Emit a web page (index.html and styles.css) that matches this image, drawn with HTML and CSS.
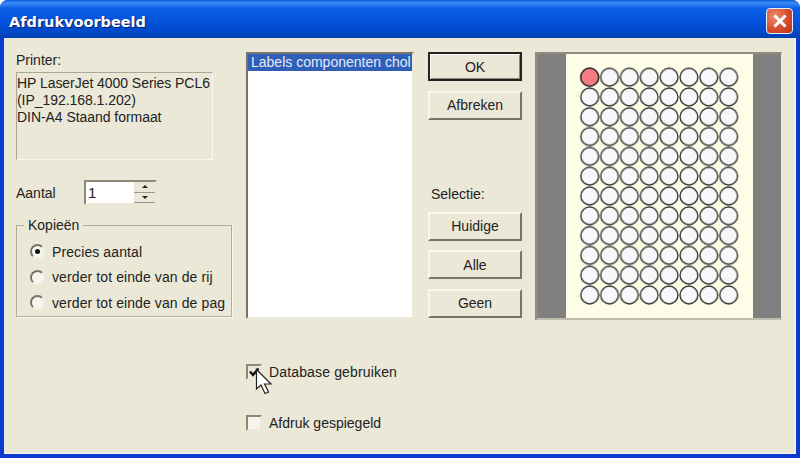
FILE: index.html
```html
<!DOCTYPE html>
<html lang="nl">
<head>
    <meta charset="UTF-8">
    <meta name="viewport" content="width=device-width, initial-scale=1.0">
    <title>Afdrukvoorbeeld</title>
    <link rel="stylesheet" href="styles.css">
</head>
<body>
    <div class="window">
        <div class="titlebar">
            <span class="title">Afdrukvoorbeeld</span>
            <button class="close" type="button" aria-label="Sluiten">
                <svg width="16" height="16" viewBox="0 0 16 16"><path d="M2.5 2.5 L13.5 13.5 M13.5 2.5 L2.5 13.5" stroke="#fff" stroke-width="3" fill="none"/></svg>
            </button>
        </div>

        <div class="client">
            <div class="col-left">
                <div class="field-label">Printer:</div>
                <div class="printer-box">HP LaserJet 4000 Series PCL6<br>(IP_192.168.1.202)<br>DIN-A4 Staand formaat</div>

                <div class="amount-row">
                    <span class="amount-label">Aantal</span>
                    <div class="spin">
                        <span class="spin-value">1</span>
                        <span class="spin-buttons">
                            <span class="spin-btn"><i class="arrow-up"></i></span>
                            <span class="spin-btn"><i class="arrow-down"></i></span>
                        </span>
                    </div>
                </div>

                <div class="group">
                    <span class="group-title">Kopieën</span>
                    <div class="radio-row"><span class="radio checked"></span>Precies aantal</div>
                    <div class="radio-row"><span class="radio"></span>verder tot einde van de rij</div>
                    <div class="radio-row"><span class="radio"></span>verder tot einde van de pag</div>
                </div>
            </div>

            <div class="col-middle">
                <div class="listbox">
                    <div class="list-item">Labels componenten chol</div>
                </div>
                <div class="check-row first">
                    <span class="check checked">
                        <svg width="12" height="12" viewBox="0 0 12 12"><path d="M2 5.5 L5 9 L10.5 2.5" stroke="#111" stroke-width="2.4" fill="none"/></svg>
                    </span>
                    Database gebruiken
                    <svg class="cursor" width="20" height="28" viewBox="0 0 20 28"><path d="M1.5 1.5 L1.5 21 L6 17 L10 25.5 L13.5 24 L9.5 16 L16 16 Z" fill="#fff" stroke="#222" stroke-width="1.2"/></svg>
                </div>
                <div class="check-row second">
                    <span class="check"></span>
                    Afdruk gespiegeld
                </div>
            </div>

            <div class="col-buttons">
                <button class="btn default" type="button">OK</button>
                <button class="btn" type="button">Afbreken</button>
                <div class="selection-label">Selectie:</div>
                <button class="btn" type="button">Huidige</button>
                <button class="btn" type="button">Alle</button>
                <button class="btn" type="button">Geen</button>
            </div>

            <div class="preview">
                <div class="margin-bar"></div>
                <div class="paper">
                    <svg width="187" height="266" viewBox="0 0 187 266">
                        <defs>
                            <pattern id="label" width="19.85" height="19.8" patternUnits="userSpaceOnUse" x="13.8" y="13.3">
                                <circle cx="9.9" cy="9.9" r="8.9" fill="#f8f8fa" stroke="#333" stroke-width="1.4"/>
                            </pattern>
                        </defs>
                        <rect x="13.8" y="13.3" width="158.8" height="237.6" fill="url(#label)"/>
                        <circle cx="23.7" cy="23.2" r="8.9" fill="#f57b80" stroke="#333" stroke-width="1.4"/>
                    </svg>
                </div>
                <div class="margin-bar"></div>
            </div>
        </div>
    </div>
</body>
</html>
```

FILE: styles.css
```css
body {
    margin: 0;
    font-family: "Liberation Sans", Arial, sans-serif;
    font-size: 14px;
    color: #222;
    background: #fff;
}

.window {
    width: 800px;
    height: 458px;
    overflow: hidden;
    background: #0a3ad0;
    border-radius: 8px 8px 0 0;
    display: flex;
    flex-direction: column;
}

.titlebar {
    height: 38px;
    flex: none;
    display: flex;
    align-items: center;
    justify-content: space-between;
    padding: 0 7px 0 9px;
    box-sizing: border-box;
    background: linear-gradient(180deg, #0a5be0 0%, #3f8cf3 8%, #0a5fe8 22%, #0453dc 55%, #0349c8 85%, #0240b0 100%);
}

.title {
    font-family: "DejaVu Sans", sans-serif;
    font-weight: bold;
    font-size: 14.5px;
    color: #fff;
    text-shadow: 1px 1px 1px #0a1f70;
    margin-top: 5px;
}

.close {
    width: 27px;
    height: 26px;
    margin-top: 4px;
    padding: 0;
    display: flex;
    align-items: center;
    justify-content: center;
    border: 1px solid #e8eefc;
    border-radius: 4px;
    background: radial-gradient(circle at 30% 30%, #ee8a6c, #d5482a 60%, #b93418);
}

.client {
    flex: 1;
    margin: 0 4px 4px 4px;
    padding: 14px 0 0 12px;
    display: flex;
    background: #ebe8d8;
    box-shadow: inset -1px -1px 0 #f6f5ee;
}

/* linke kolom */
.col-left {
    width: 216px;
    margin-right: 14px;
}

.field-label {
    line-height: 17px;
    margin-bottom: 3px;
}

.printer-box {
    width: 197px;
    height: 88px;
    box-sizing: border-box;
    padding: 2px 0;
    line-height: 17px;
    letter-spacing: -0.05px;
    border: 1px solid #a9a796;
    border-right-color: #f7f6ef;
    border-bottom-color: #f7f6ef;
    white-space: nowrap;
}

.amount-row {
    display: flex;
    align-items: center;
    margin-top: 20px;
}

.amount-label {
    width: 68px;
}

.spin {
    width: 73px;
    height: 25px;
    box-sizing: border-box;
    display: flex;
    background: #fff;
    border: 2px solid #8a8878;
    border-right-color: #ebe8d8;
    border-bottom-color: #ebe8d8;
}

.spin-value {
    flex: 1;
    padding-left: 2px;
    line-height: 21px;
    font-size: 15px;
}

.spin-buttons {
    width: 21px;
    display: flex;
    flex-direction: column;
}

.spin-btn {
    flex: 1;
    display: flex;
    align-items: center;
    justify-content: center;
    background: #ebe8d8;
    border-bottom: 1px solid #9a9888;
}

.arrow-up, .arrow-down {
    width: 0;
    height: 0;
    border-left: 3px solid transparent;
    border-right: 3px solid transparent;
}

.arrow-up {
    border-bottom: 3px solid #222;
}

.arrow-down {
    border-top: 3px solid #222;
}

.group {
    position: relative;
    height: 92px;
    box-sizing: border-box;
    margin-top: 20px;
    padding-top: 13px;
    padding-left: 13px;
    border: 1px solid #b0ae9e;
    box-shadow: 1px 1px 0 #f7f6ef;
}

.group-title {
    position: absolute;
    top: -9px;
    left: 7px;
    padding: 0 4px;
    line-height: 17px;
    background: #ebe8d8;
}

.radio-row {
    height: 25.5px;
    display: flex;
    align-items: center;
    gap: 7px;
    letter-spacing: 0.1px;
}

.radio {
    width: 15px;
    height: 15px;
    flex: none;
    box-sizing: border-box;
    display: flex;
    align-items: center;
    justify-content: center;
    border-radius: 50%;
    background: #f6f5ee;
    border: 2px solid;
    border-color: #77756a #f2f1e8 #f2f1e8 #77756a;
}

.radio.checked::before {
    content: "";
    width: 5px;
    height: 5px;
    border-radius: 50%;
    background: #111;
}

/* midden */
.col-middle {
    width: 168px;
    margin-right: 14px;
}

.listbox {
    height: 267px;
    box-sizing: border-box;
    overflow: hidden;
    background: #fff;
    border: 2px solid #77756a;
    border-right-color: #ebe8d8;
    border-bottom-color: #ebe8d8;
}

.list-item {
    height: 17px;
    line-height: 17px;
    padding-left: 3px;
    white-space: nowrap;
    color: #e4ecfa;
    background: #2f5fb8;
}

.check-row {
    position: relative;
    display: flex;
    align-items: center;
    gap: 7px;
    height: 18px;
}

.check-row.first {
    margin-top: 44px;
    letter-spacing: 0.15px;
}

.check-row.second {
    margin-top: 33px;
}

.check {
    width: 16px;
    height: 16px;
    box-sizing: border-box;
    display: flex;
    align-items: center;
    justify-content: center;
    background: #f4f3ec;
    border: 2px solid;
    border-color: #8a8878 #ebe8d8 #ebe8d8 #8a8878;
}

.check.checked {
    background: #ebe8d8;
}

.cursor {
    position: absolute;
    left: 9px;
    top: 5px;
}

/* knoppen */
.col-buttons {
    width: 94px;
    margin-right: 13px;
    display: flex;
    flex-direction: column;
    gap: 9.5px;
}

.btn {
    height: 29px;
    padding: 0;
    flex: none;
    font-family: inherit;
    font-size: 14px;
    color: #222;
    background: #ebe8d8;
    border: 2px solid;
    border-color: #f8f7f0 #77756a #77756a #f8f7f0;
}

.btn.default {
    border-color: #222;
    box-shadow: inset 1px 1px 0 #f8f7f0, inset -1px -1px 0 #8a8878;
}

.selection-label {
    margin: 57px 0 0 3px;
    line-height: 17px;
}

.selection-label + .btn {
    margin-top: -1px;
}

/* voorbeeld */
.preview {
    width: 247px;
    height: 268px;
    box-sizing: border-box;
    display: flex;
    border: 3px solid;
    border-color: #8e8c7e #ebe8d8 #c0beae #8e8c7e;
    border-width: 2px 1px 2px 3px;
}

.margin-bar {
    width: 28px;
    background: #808080;
}

.paper {
    flex: 1;
    background: #fdfde8;
}

.paper svg {
    display: block;
}
```
